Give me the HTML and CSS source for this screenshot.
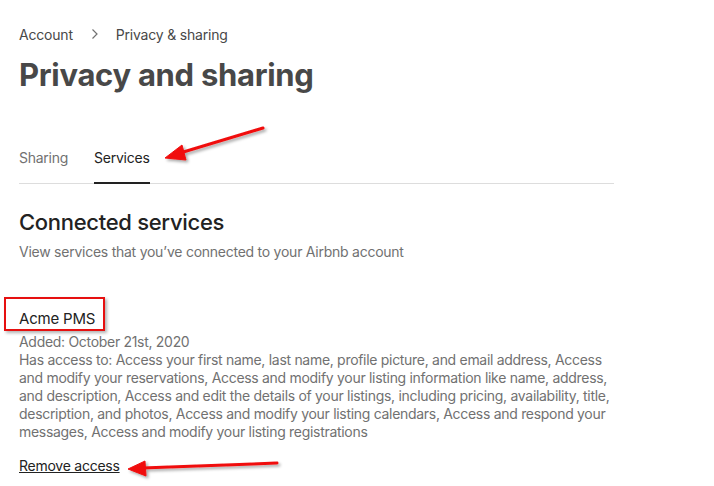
FILE: index.html
```html
<!DOCTYPE html>
<html>
<head>
<meta charset="utf-8">
<link rel="stylesheet" href="styles.css">
</head>
<body>
<main class="page">
  <nav class="crumbs">
    <span>Account</span>
    <svg class="chev" width="8" height="12" viewBox="0 0 8 12"><path d="M1.5 1.5 L6 6 L1.5 10.5" fill="none" stroke="#717171" stroke-width="1.2"/></svg>
    <span>Privacy &amp; sharing</span>
  </nav>
  <h1 class="title">Privacy and sharing</h1>
  <div class="tabs">
    <div class="tab">Sharing</div>
    <div class="tab active">Services</div>
  </div>
  <section class="connected">
    <h2 class="h2">Connected services</h2>
    <p class="sub">View services that you’ve connected to your Airbnb account</p>
    <div class="service">
      <div class="name"><span class="hl">Acme PMS</span></div>
      <div class="meta added">Added: October 21st, 2020</div>
      <p class="meta access">Has access to: Access your first name, last name, profile picture, and email address, Access and modify your reservations, Access and modify your listing information like name, address, and description, Access and edit the details of your listings, including pricing, availability, title, description, and photos, Access and modify your listing calendars, Access and respond your messages, Access and modify your listing registrations</p>
      <a class="remove" href="#">Remove access</a>
    </div>
  </section>
</main>
<svg class="arrows" width="714" height="486" viewBox="0 0 714 486">
  <defs>
    <filter id="sh" x="-20%" y="-50%" width="140%" height="200%">
      <feDropShadow dx="2" dy="2" stdDeviation="1.5" flood-color="#000" flood-opacity="0.35"/>
    </filter>
  </defs>
  <g filter="url(#sh)" fill="#f01010" stroke="#f01010">
    <line x1="263" y1="128" x2="180" y2="153" stroke-width="3" stroke-linecap="round"/>
    <polygon points="165,158 182,145 186,160" stroke-width="1" stroke-linejoin="round"/>
    <line x1="277" y1="463" x2="142" y2="468" stroke-width="3" stroke-linecap="round"/>
    <polygon points="128,469 145,461 146,476" stroke-width="1" stroke-linejoin="round"/>
  </g>
</svg>
</body>
</html>
```
FILE: styles.css
```css
html, body {
  margin: 0;
  padding: 0;
  background: #fff;
}
body {
  font-family: "Inter", "Liberation Sans", sans-serif;
  color: #484848;
  position: relative;
  width: 714px;
  height: 486px;
  overflow: hidden;
}
.page {
  padding: 25px 0 0 19px;
  width: 595px;
}
.crumbs {
  display: flex;
  align-items: center;
  font-size: 14px;
  letter-spacing: -0.2px;
  color: #484848;
  height: 18px;
}
.chev {
  margin: 0 17px 0 18px;
}
.title {
  margin: 12px 0 0 0;
  font-size: 31px;
  font-weight: 700;
  line-height: 40px;
  color: #484848;
  letter-spacing: -0.3px;
}
.tabs {
  display: flex;
  gap: 26px;
  margin-top: 53px;
  border-bottom: 1px solid #dddddd;
}
.tab {
  font-size: 14px;
  letter-spacing: -0.25px;
  line-height: 20px;
  padding-bottom: 14px;
  color: #717171;
  border-bottom: 2px solid transparent;
  margin-bottom: -1px;
}
.tab.active {
  color: #222;
  border-bottom-color: #222;
}
.h2 {
  margin: 24px 0 0 0;
  font-size: 22px;
  font-weight: 500;
  line-height: 28px;
  letter-spacing: -0.3px;
  color: #222;
}
.sub {
  margin: 6px 0 0 0;
  font-size: 14px;
  letter-spacing: -0.25px;
  line-height: 20px;
  color: #717171;
}
.service {
  margin-top: 47px;
}
.name {
  font-size: 15px;
  letter-spacing: -0.2px;
  line-height: 20px;
  color: #222;
}
.hl {
  display: inline-block;
  position: relative;
}
.hl::before {
  content: "";
  position: absolute;
  left: -15px;
  top: -12px;
  width: 97px;
  height: 30px;
  border: 2px solid #e61010;
  box-shadow: 2px 2px 3px rgba(0,0,0,0.3);
}
.meta {
  font-size: 14px;
  letter-spacing: -0.3px;
  line-height: 18px;
  color: #717171;
  margin: 0;
}
.added {
  margin-top: 4px;
}
.remove {
  display: inline-block;
  margin-top: 16px;
  font-size: 14px;
  letter-spacing: -0.25px;
  line-height: 18px;
  color: #222;
  text-decoration: underline;
}
.arrows {
  position: absolute;
  left: 0;
  top: 0;
  pointer-events: none;
}
```
